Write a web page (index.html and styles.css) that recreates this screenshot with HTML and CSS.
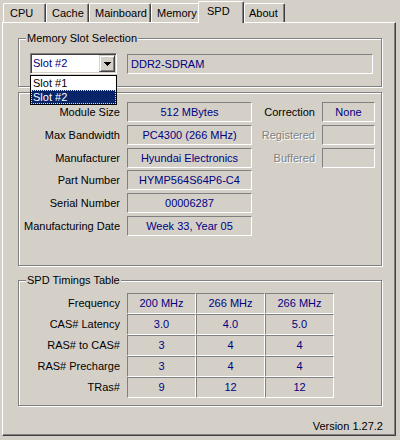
FILE: index.html
```html
<!doctype html>
<html>
  <head>
    <title>CPU-Z - SPD</title>
    <link rel="stylesheet" href="styles.css">
  </head>
  <body>
    <div class="window">
      <div class="tabs">
        <div class="tab tab-cpu">CPU</div>
        <div class="tab tab-cache">Cache</div>
        <div class="tab tab-mainboard">Mainboard</div>
        <div class="tab tab-memory">Memory</div>
        <div class="tab tab-spd active">SPD</div>
        <div class="tab tab-about">About</div>
      </div>

      <div class="panel">
        <div class="group slot-group">
          <div class="group-title">Memory Slot Selection</div>
          <div class="slot-row">
            <div class="combo">
              <span class="combo-text">Slot #2</span>
              <span class="combo-btn">
                <svg width="7" height="4" viewBox="0 0 7 4" shape-rendering="crispEdges">
                  <path d="M0 0h7v1h-1v1h-1v1h-1v1h-1v-1h-1v-1h-1v-1h-1z" fill="#000" />
                </svg>
              </span>
              <ul class="combo-list">
                <li>Slot #1</li>
                <li class="selected">Slot #2</li>
              </ul>
            </div>
            <div class="field field-type">DDR2-SDRAM</div>
          </div>
        </div>

        <div class="group module-group">
          <div class="info-row">
            <div class="label">Module Size</div>
            <div class="field field-wide">512 MBytes</div>
            <div class="label label-side">Correction</div>
            <div class="field field-small">None</div>
          </div>
          <div class="info-row">
            <div class="label">Max Bandwidth</div>
            <div class="field field-wide">PC4300 (266 MHz)</div>
            <div class="label label-side disabled">Registered</div>
            <div class="field field-small"></div>
          </div>
          <div class="info-row">
            <div class="label">Manufacturer</div>
            <div class="field field-wide">Hyundai Electronics</div>
            <div class="label label-side disabled">Buffered</div>
            <div class="field field-small"></div>
          </div>
          <div class="info-row">
            <div class="label">Part Number</div>
            <div class="field field-wide">HYMP564S64P6-C4</div>
          </div>
          <div class="info-row">
            <div class="label">Serial Number</div>
            <div class="field field-wide">00006287</div>
          </div>
          <div class="info-row">
            <div class="label">Manufacturing Date</div>
            <div class="field field-wide">Week 33, Year 05</div>
          </div>
        </div>

        <div class="group timings-group">
          <div class="group-title">SPD Timings Table</div>
          <div class="timings">
            <div class="t-label">Frequency</div>
            <div class="cell">200 MHz</div>
            <div class="cell">266 MHz</div>
            <div class="cell">266 MHz</div>

            <div class="t-label">CAS# Latency</div>
            <div class="cell">3.0</div>
            <div class="cell">4.0</div>
            <div class="cell">5.0</div>

            <div class="t-label">RAS# to CAS#</div>
            <div class="cell">3</div>
            <div class="cell">4</div>
            <div class="cell">4</div>

            <div class="t-label">RAS# Precharge</div>
            <div class="cell">3</div>
            <div class="cell">4</div>
            <div class="cell">4</div>

            <div class="t-label">TRas#</div>
            <div class="cell">9</div>
            <div class="cell">12</div>
            <div class="cell">12</div>
          </div>
        </div>

        <div class="version">Version 1.27.2</div>
      </div>
    </div>
  </body>
</html>
```

FILE: styles.css
```css
* {
  margin: 0;
  padding: 0;
  box-sizing: border-box;
}

body {
  background: #d4d0c8;
  font-family: "Liberation Sans", Arial, sans-serif;
  font-size: 11px;
  color: #000;
}

.window {
  width: 400px;
  height: 440px;
  overflow: hidden;
}

/* tab strip */

.tabs {
  display: flex;
  align-items: flex-end;
  height: 22px;
  padding-left: 3px;
  position: relative;
  z-index: 1;
}

.tab {
  height: 19px;
  padding: 3px 0 0 5px;
  line-height: 13px;
  white-space: nowrap;
  background: #d4d0c8;
  border-top: 1px solid #fff;
  border-left: 1px solid #fff;
  border-right: 1px solid #404040;
  box-shadow: inset -1px 0 #808080;
  border-radius: 2px 2px 0 0;
}

.tab-cpu {
  width: 43px;
  padding-left: 6px;
}

.tab-cache {
  width: 43px;
}

.tab-mainboard {
  width: 62px;
}

.tab-memory {
  width: 49px;
}

.tab-about {
  width: 41px;
  padding-left: 4px;
}

.tab.active {
  width: 46px;
  height: 22px;
  margin-left: -2px;
  margin-bottom: -1px;
  padding-left: 8px;
}

/* page */

.panel {
  margin-left: 2px;
  width: 394px;
  height: 414px;
  padding: 15px 0 0 15px;
  border-top: 1px solid #fff;
  border-left: 1px solid #fff;
  border-right: 1px solid #404040;
  border-bottom: 1px solid #404040;
  box-shadow: inset -1px -1px #808080;
}

.group {
  position: relative;
  width: 364px;
  border: 1px solid #808080;
  box-shadow: 1px 1px 0 #fff, inset 1px 1px 0 #fff;
}

.group-title {
  position: absolute;
  top: -7px;
  left: 7px;
  padding: 0 1px;
  line-height: 13px;
  background: #d4d0c8;
  white-space: nowrap;
}

.slot-group {
  height: 49px;
}

.module-group {
  height: 174px;
  margin-top: 5px;
  padding-top: 9px;
}

.timings-group {
  height: 126px;
  margin-top: 14px;
  padding-top: 12px;
}

/* memory slot */

.slot-row {
  display: flex;
  align-items: flex-start;
  padding: 14px 0 0 11px;
}

.combo {
  position: relative;
  display: flex;
  width: 87px;
  height: 21px;
  padding: 1px;
  margin-right: 10px;
  background: #fff;
  border-top: 1px solid #808080;
  border-left: 1px solid #808080;
  border-right: 1px solid #fff;
  border-bottom: 1px solid #fff;
  box-shadow: inset 1px 1px #404040, inset -1px -1px #d4d0c8;
}

.combo-text {
  flex: 1;
  padding-left: 1px;
  line-height: 17px;
  color: #000080;
}

.combo-btn {
  display: flex;
  align-items: center;
  justify-content: center;
  width: 16px;
  background: #d4d0c8;
  border-top: 1px solid #d4d0c8;
  border-left: 1px solid #d4d0c8;
  border-right: 1px solid #404040;
  border-bottom: 1px solid #404040;
  box-shadow: inset 1px 1px #fff, inset -1px -1px #808080;
}

.combo-list {
  position: absolute;
  top: 21px;
  left: -1px;
  width: 87px;
  list-style: none;
  background: #fff;
  border: 1px solid #000;
  z-index: 2;
}

.combo-list li {
  height: 14px;
  padding-left: 2px;
  line-height: 14px;
}

.combo-list .selected {
  background: #0a246a;
  color: #fff;
  outline: 1px dotted #f4e0a0;
  outline-offset: -1px;
}

/* value boxes */

.field {
  height: 20px;
  line-height: 18px;
  color: #000080;
  text-align: center;
  white-space: nowrap;
  overflow: hidden;
  border-top: 1px solid #808080;
  border-left: 1px solid #808080;
  border-right: 1px solid #fff;
  border-bottom: 1px solid #fff;
}

.field-type {
  width: 246px;
  margin-top: 1px;
  padding-left: 3px;
  text-align: left;
}

.field-wide {
  width: 125px;
}

.field-small {
  width: 53px;
}

.info-row {
  display: flex;
  height: 20px;
  margin-bottom: 2.75px;
}

.label {
  width: 101px;
  margin-right: 7px;
  line-height: 20px;
  text-align: right;
  white-space: nowrap;
}

.label-side {
  width: 63px;
}

.disabled {
  color: #808080;
  text-shadow: 1px 1px 0 #fff;
}

/* timings table */

.timings {
  display: grid;
  grid-template-columns: 108px repeat(3, 69px);
  grid-auto-rows: 21px;
}

.t-label {
  padding-right: 7px;
  line-height: 21px;
  text-align: right;
  white-space: nowrap;
}

.cell {
  line-height: 19px;
  color: #000080;
  text-align: center;
  border-top: 1px solid #808080;
  border-left: 1px solid #808080;
  border-right: 1px solid #fff;
  border-bottom: 1px solid #fff;
}

.version {
  width: 365px;
  margin-top: 14px;
  line-height: 13px;
  text-align: right;
}
```
